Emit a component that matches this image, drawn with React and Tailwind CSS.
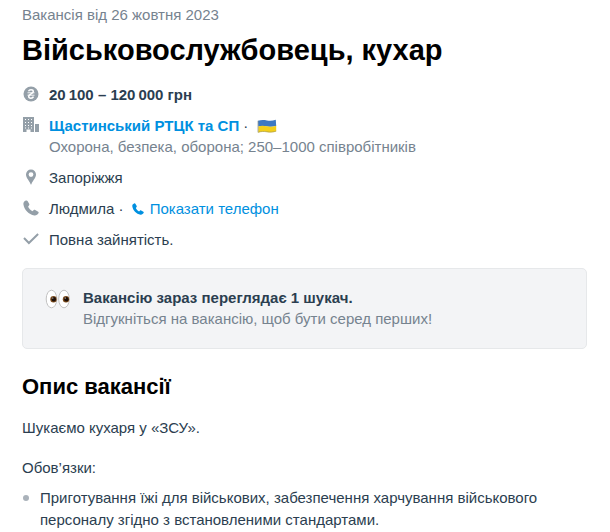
function HryvniaIcon() {
  return (
    <svg viewBox="0 0 16 16" className="size-4" aria-hidden="true">
      <circle cx="8" cy="8" r="7.5" fill="currentColor" />
      <path
        d="M5.5 5.3C6 4.2 7 3.8 8 3.8c1.5 0 2.3.7 2.3 1.7C10.300 7.700 5.700 8.200 5.700 10.500c0 1 .9 1.700 2.300 1.700 1.100 0 2-.5 2.500-1.500"
        fill="none"
        stroke="#fff"
        strokeWidth="1.5"
      />
      <path d="M4.500 6.800h7M4.500 9.200h7" stroke="#fff" strokeWidth=".9" />
    </svg>
  );
}

function CompanyIcon() {
  return (
    <svg viewBox="0 0 16 16" className="size-4" fill="currentColor" aria-hidden="true">
      <path
        fillRule="evenodd"
        d="M0 0h11v15H7.500v-2.500h-4V15H0zM2 2v1h1V2zm3 0v1h1V2zm3 0v1h1V2zM2 5v1h1V5zm3 0v1h1V5zm3 0v1h1V5zM2 8v1h1V8zm3 0v1h1V8zm3 0v1h1V8zM2 10.500v1h1v-1zm3 0v1h1v-1zm3 0v1h1v-1z"
      />
      <path d="M12 7h4v8h-4z" />
    </svg>
  );
}

function PinIcon() {
  return (
    <svg viewBox="0 0 16 16" className="size-4" fill="currentColor" aria-hidden="true">
      <path
        fillRule="evenodd"
        d="M8 .5a5 5 0 0 0-5 5.1C3 9 6.4 11.8 7.6 15.2q.4.7.8 0C9.6 11.8 13 9 13 5.6a5 5 0 0 0-5-5.1zM8 3.200a2.400 2.400 0 1 1 0 4.800 2.400 2.400 0 0 1 0-4.800z"
      />
    </svg>
  );
}

function PhoneIcon({ className }) {
  return (
    <svg viewBox="0 0 16 16" className={className} fill="currentColor" aria-hidden="true">
      <path d="M2.9.6C1.2 1.2.2 2.6.4 4.3c.7 5.6 5.3 10.300 11 11.200 1.700.2 3.400-.7 4.200-2.400.2-.6.1-1-.4-1.400l-3-1.700c-.5-.3-1-.2-1.400.1l-1.400 1.100C7.400 10.100 6 8.600 5.100 6.700l1-1.400c.3-.4.4-.8.2-1.200L4.700 1.200C4.300.5 3.600.3 2.900.6z" />
    </svg>
  );
}

function CheckIcon() {
  return (
    <svg viewBox="0 0 16 16" className="size-4" fill="none" aria-hidden="true">
      <path d="M1 7 5.9 12 15.1 3" stroke="currentColor" strokeWidth="2" />
    </svg>
  );
}

function FlagIcon() {
  return (
    <svg viewBox="0 0 20 14" className="ml-1 inline-block h-3.5 w-5 align-[-2px]" role="img" aria-label="Україна">
      <path d="M1 1.8C4 .7 7 .9 10 1.4s6 .3 8.800-.7L19.200 7C16 8 13 8 10 7.400S4 6.800 1.200 7.600z" fill="#3c78c3" />
      <path d="M1.2 7.4C4 6.6 7 6.7 10 7.3s6 .4 9.200-.5v5.400c-3 1.100-6.200 1.200-9.200.7s-6-.5-8.800.5z" fill="#f3cf1b" />
      <path d="M1 1.8v11.6" stroke="#8b9186" strokeWidth=".7" />
      <path d="M1.2 13.3c2.800-1 5.800-1 8.800-.5s6.200.4 9.200-.7" fill="none" stroke="#a99b45" strokeWidth=".7" />
    </svg>
  );
}

function EyesIcon() {
  return (
    <svg viewBox="0 0 26 20" className="mt-0.5 h-5 w-[26px] shrink-0" aria-hidden="true">
      <g fill="#fff" stroke="#c2c2c2">
        <ellipse cx="6.5" cy="10" rx="5.3" ry="8.8" />
        <ellipse cx="19" cy="10" rx="5.3" ry="8.8" />
      </g>
      <g fill="#7a4a1c">
        <circle cx="8.5" cy="10.2" r="3.2" />
        <circle cx="21" cy="10.2" r="3.2" />
      </g>
      <g fill="#1c0f08">
        <circle cx="8.8" cy="10.2" r="2.2" />
        <circle cx="21.3" cy="10.2" r="2.2" />
      </g>
      <circle cx="7.8" cy="9" r=".6" fill="#fff" />
      <circle cx="20.3" cy="9" r=".6" fill="#fff" />
    </svg>
  );
}

function Row({ icon, children }) {
  return (
    <li className="flex gap-2.5">
      <span className="flex h-5 w-[18px] shrink-0 items-center justify-center text-[#949fa8]">{icon}</span>
      <div className="-ml-px">{children}</div>
    </li>
  );
}

export default function App() {
  return (
    <main className="min-h-screen bg-white pt-1 pr-[23px] pl-[22px] font-['Liberation_Sans',Arial,sans-serif] text-[15px] leading-[21px] text-[#2b3e50]">
      <p className="text-[#76838f]">Вакансія від 26 жовтня 2023</p>
      <h1 className="mt-2 text-[29px] leading-[34px] font-bold text-black">Військовослужбовець, кухар</h1>

      <ul className="mt-[17px] flex flex-col gap-2.5">
        <Row icon={<HryvniaIcon />}>
          <b>20&#8239;100&nbsp;–&nbsp;120&#8239;000 грн</b>
        </Row>
        <Row icon={<CompanyIcon />}>
          <a href="#company" className="font-bold text-[#0090e0]">Щастинський РТЦК та СП</a>
          {' · '}
          <FlagIcon />
          <p className="text-[#76838f]">Охорона, безпека, оборона; 250–1000 співробітників</p>
        </Row>
        <Row icon={<PinIcon />}>Запоріжжя</Row>
        <Row icon={<PhoneIcon className="size-4" />}>
          Людмила ·{' '}
          <a href="#phone" className="ml-1 text-[#0090e0]">
            <PhoneIcon className="mr-1.5 inline-block size-3 align-[-1px]" />
            Показати телефон
          </a>
        </Row>
        <Row icon={<CheckIcon />}>Повна зайнятість.</Row>
      </ul>

      <section className="mt-[18px] flex gap-3 rounded-[5px] border border-[#e6e8ea] bg-[#f3f4f6] px-[22px] pt-[18px] pb-[19px]">
        <EyesIcon />
        <div>
          <b>Вакансію зараз переглядає 1 шукач.</b>
          <p className="text-[#76838f]">Відгукніться на вакансію, щоб бути серед перших!</p>
        </div>
      </section>

      <h2 className="mt-6 text-[22px] leading-[28px] font-bold text-black">Опис вакансії</h2>
      <div className="mt-4 leading-[22px]">
        <p>Шукаємо кухаря у «ЗСУ».</p>
        <p className="mt-[18px]">Обов’язки:</p>
        <ul className="mt-2">
          <li className="flex gap-[11px]">
            <span className="mt-2 ml-px size-1.5 shrink-0 rounded-full bg-[#aab2ba]" />
            <span>Приготування їжі для військових, забезпечення харчування військового персоналу згідно з встановленими стандартами.</span>
          </li>
        </ul>
      </div>
    </main>
  );
}
